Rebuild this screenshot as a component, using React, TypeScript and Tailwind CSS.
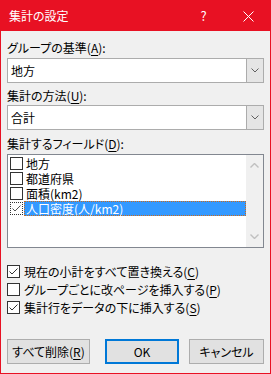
import type { ReactNode } from 'react';

const FONT = '"Noto Sans CJK JP", "Liberation Sans", sans-serif';

/** Access key with underline, e.g. (A) */
function Key({ k }: { k: string }) {
  return (
    <>
      (<span className="underline underline-offset-2">{k}</span>)
    </>
  );
}

function Check({ dark = true }: { dark?: boolean }) {
  return (
    <svg width="11" height="11" viewBox="0 0 11 11" className="block">
      <polyline
        points="1.5,5.5 4,8 9.5,2.5"
        fill="none"
        stroke={dark ? '#333333' : '#555555'}
        strokeWidth="1"
      />
    </svg>
  );
}

function Box({ checked, dotted = false }: { checked: boolean; dotted?: boolean }) {
  return (
    <span
      className={`w-[13px] h-[13px] flex-shrink-0 flex items-center justify-center bg-white border ${
        dotted ? 'border-dotted border-[#333333]' : 'border-[#333333]'
      }`}
    >
      {checked && <Check dark={!dotted} />}
    </span>
  );
}

function Combo({ value }: { value: string }) {
  return (
    <div className="h-[25px] flex border border-[#acacac] bg-white">
      <div className="flex-1 flex items-center pl-[3px] text-[12px] text-black">{value}</div>
      <div className="w-[17px] flex items-center justify-center bg-[#e5e5e5] border-l border-[#acacac]">
        <svg width="8" height="5" viewBox="0 0 8 5">
          <polyline points="0.5,0.5 4,4 7.5,0.5" fill="none" stroke="#606060" strokeWidth="1" />
        </svg>
      </div>
    </div>
  );
}

function Label({ children, mt }: { children: ReactNode; mt: string }) {
  return <div className={`${mt} h-[15px] leading-[15px] text-[12px] text-black`}>{children}</div>;
}

const FIELDS = ['地方', '都道府県', '面積(km2)', '人口密度(人/km2)'];

function Option({ checked, children }: { checked: boolean; children: ReactNode }) {
  return (
    <div className="h-[18px] flex items-center">
      <Box checked={checked} />
      <span className="ml-[4px] text-[12px] leading-[15px] text-black">{children}</span>
    </div>
  );
}

export default function App() {
  return (
    <div
      className="w-[271px] h-[374px] flex flex-col bg-[#e81123] p-px select-none [font-feature-settings:'palt']"
      style={{ fontFamily: FONT }}
    >
      {/* Title bar */}
      <div className="h-[30px] flex items-center text-white text-[12px]">
        <span className="pl-[8px]">集計の設定</span>
        <div className="ml-auto flex h-full">
          <div className="w-[45px] flex items-center justify-center text-[13px]">?</div>
          <div className="w-[44px] flex items-center justify-center">
            <svg width="11" height="11" viewBox="0 0 11 11">
              <path d="M0.5 0.5 L10.5 10.5 M10.5 0.5 L0.5 10.5" stroke="white" strokeWidth="1" />
            </svg>
          </div>
        </div>
      </div>

      {/* Body */}
      <div className="flex-1 bg-[#f0f0f0] px-[6px] pt-[9px] flex flex-col">
        <Label mt="mt-0">
          グループの基準<Key k="A" />:
        </Label>
        <div className="mt-[3px]">
          <Combo value="地方" />
        </div>

        <Label mt="mt-[5px]">
          集計の方法<Key k="U" />:
        </Label>
        <div className="mt-[2px]">
          <Combo value="合計" />
        </div>

        <Label mt="mt-[6px]">
          集計するフィールド<Key k="D" />:
        </Label>
        <div className="mt-[3px] h-[94px] flex border border-[#828790] bg-white">
          <div className="flex-1 pt-px pl-[2px]">
            {FIELDS.map((f, i) => {
              const selected = i === FIELDS.length - 1;
              return (
                <div key={f} className="h-[15px] flex items-center">
                  <Box checked={selected} dotted={selected} />
                  <span
                    className={`ml-px flex-1 h-[15px] pl-[2px] leading-[15px] text-[12px] ${
                      selected
                        ? 'bg-[#3399ff] text-white outline-1 outline-dotted outline-[#cc6a1a] -outline-offset-1'
                        : 'text-black'
                    }`}
                  >
                    {f}
                  </span>
                </div>
              );
            })}
          </div>
          <div className="w-[17px] bg-[#f0f0f0] flex flex-col items-center justify-between py-[8px]">
            <svg width="9" height="5" viewBox="0 0 9 5">
              <polyline points="0.5,4.5 4.5,0.5 8.5,4.5" fill="none" stroke="#c0c0c0" strokeWidth="1.4" />
            </svg>
            <svg width="9" height="5" viewBox="0 0 9 5">
              <polyline points="0.5,0.5 4.5,4.5 8.5,0.5" fill="none" stroke="#c0c0c0" strokeWidth="1.4" />
            </svg>
          </div>
        </div>

        <div className="mt-[14px] flex flex-col">
          <Option checked>
            現在の小計をすべて置き換える<Key k="C" />
          </Option>
          <Option checked={false}>
            グループごとに改ページを挿入する<Key k="P" />
          </Option>
          <Option checked>
            集計行をデータの下に挿入する<Key k="S" />
          </Option>
        </div>

        <div className="mt-[23px] flex text-[12px] text-black">
          <button className="w-[83px] h-[25px] bg-[#e1e1e1] border border-[#adadad]">
            すべて削除<Key k="R" />
          </button>
          <button className="ml-[15px] w-[74px] h-[25px] bg-[#e1e1e1] border-2 border-[#0078d7]">
            OK
          </button>
          <button className="ml-[10px] w-[75px] h-[25px] bg-[#e1e1e1] border border-[#adadad]">
            キャンセル
          </button>
        </div>
      </div>
    </div>
  );
}
